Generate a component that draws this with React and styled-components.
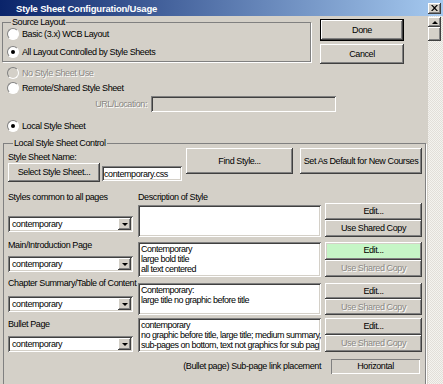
import styled, { createGlobalStyle, css } from "styled-components";

const GlobalStyles = createGlobalStyle`
  html, body {
    margin: 0;
    padding: 0;
  }
  body {
    width: 443px;
    height: 384px;
    overflow: hidden;
    background: #d4d0c8;
    font-family: "Liberation Sans", Arial, sans-serif;
    font-size: 9px;
    letter-spacing: -0.4px;
    line-height: 11px;
    color: #000;
  }
`;

// classic 3d edges
const raised = css`
  box-shadow: inset -1px -1px #404040, inset 1px 1px #ffffff,
    inset -2px -2px #808080, inset 2px 2px #d4d0c8;
`;

const sunken = css`
  box-shadow: inset 1px 1px #808080, inset -1px -1px #ffffff,
    inset 2px 2px #404040, inset -2px -2px #d4d0c8;
`;

const Window = styled.div`
  width: 443px;
  height: 384px;
  display: flex;
  flex-direction: column;
  background: #d4d0c8;
  overflow: hidden;
`;

const TitleBar = styled.div`
  height: 16px;
  flex: none;
  display: flex;
  align-items: center;
  justify-content: space-between;
  padding: 0 2px 0 16px;
  background: linear-gradient(to right, #0a246a, #a6caf0);
  color: #fff;
  font-weight: bold;
  font-size: 9.5px;
  letter-spacing: -0.2px;
`;

const CloseBox = styled.div`
  width: 13px;
  height: 11px;
  background: #d4d0c8;
  display: flex;
  align-items: center;
  justify-content: center;
  ${raised}
`;

const Body = styled.div`
  flex: 1;
  display: flex;
  min-height: 0;
`;

const Content = styled.div`
  width: 428px;
  flex: none;
  padding: 1px 0 0 2px;
  box-sizing: border-box;
`;

const Scrollbar = styled.div`
  width: 15px;
  flex: none;
  display: flex;
  flex-direction: column;
  padding-top: 1px;
  background: repeating-conic-gradient(#f4f3ef 0 25%, #e2dfd9 0 50%) 0 0 / 2px 2px;
`;

const ScrollPart = styled.div`
  width: 13px;
  height: ${(p) => p.$h}px;
  background: #d4d0c8;
  display: flex;
  align-items: center;
  justify-content: center;
  ${raised}
`;

const UpArrow = styled.span`
  width: 0;
  height: 0;
  border-left: 3px solid transparent;
  border-right: 3px solid transparent;
  border-bottom: 3px solid #000;
`;

const TopRow = styled.div`
  display: flex;
  align-items: flex-start;
`;

const Group = styled.fieldset`
  margin: 0;
  margin-left: ${(p) => p.$ml || 0}px;
  margin-top: ${(p) => p.$mt || 0}px;
  width: ${(p) => p.$w}px;
  box-sizing: border-box;
  padding: 0 ${(p) => p.$pr || 4}px ${(p) => p.$pb || 0}px 4px;
  border: 1px solid #808080;
  box-shadow: 1px 1px 0 #fff;
  min-width: 0;
`;

const Legend = styled.legend`
  padding: 0 1px;
  margin-left: ${(p) => p.$ml || 4}px;
  line-height: 11px;
`;

const RadioList = styled.div`
  display: flex;
  flex-direction: column;
  gap: 6px;
  padding-bottom: 3px;
`;

const RadioRow = styled.label`
  display: flex;
  align-items: center;
  gap: 3px;
  height: 12px;
  margin-top: ${(p) => p.$mt || 0}px;
  margin-left: ${(p) => p.$ml || 0}px;
  color: ${(p) => (p.$disabled ? "#8a8884" : "#000")};
  text-shadow: ${(p) => (p.$disabled ? "1px 1px #fff" : "none")};
`;

const RadioDot = styled.span`
  width: 12px;
  height: 12px;
  flex: none;
  box-sizing: border-box;
  border-radius: 50%;
  border: 1px solid;
  border-color: #808080 #ffffff #ffffff #808080;
  background: ${(p) => (p.$disabled ? "#d4d0c8" : "#fff")};
  display: flex;
  align-items: center;
  justify-content: center;

  &::after {
    content: "";
    display: ${(p) => (p.$checked ? "block" : "none")};
    width: 4px;
    height: 4px;
    border-radius: 50%;
    background: #000;
  }
`;

const ButtonCol = styled.div`
  display: flex;
  flex-direction: column;
  gap: 3px;
  margin: 2px 0 0 9px;
`;

const Button = styled.button`
  font: inherit;
  letter-spacing: inherit;
  line-height: 11px;
  white-space: nowrap;
  width: ${(p) => (p.$w ? `${p.$w}px` : "auto")};
  height: ${(p) => (p.$h ? `${p.$h}px` : "auto")};
  flex: ${(p) => (p.$grow ? 1 : "none")};
  margin-left: ${(p) => p.$ml || 0}px;
  padding: 0;
  border: none;
  border-radius: 0;
  background: ${(p) => (p.$highlight ? "#c6f5c6" : "#d4d0c8")};
  color: ${(p) => (p.$disabled ? "#8a8884" : "#000")};
  text-shadow: ${(p) => (p.$disabled ? "1px 1px #fff" : "none")};
  ${raised}
  ${(p) =>
    p.$default &&
    css`
      box-shadow: inset 0 0 0 1px #000, inset -2px -2px #404040,
        inset 2px 2px #ffffff, inset -3px -3px #808080;
    `}
`;

const UrlRow = styled.div`
  display: flex;
  align-items: center;
  margin: 2px 0 0 89px;
`;

const UrlLabel = styled.span`
  color: #8a8884;
  text-shadow: 1px 1px #fff;
  width: 56px;
  text-align: right;
`;

const Field = styled.div`
  width: ${(p) => p.$w}px;
  height: ${(p) => p.$h}px;
  margin: ${(p) => p.$m || "0"};
  box-sizing: border-box;
  background: ${(p) => (p.$gray ? "#d4d0c8" : "#fff")};
  padding: ${(p) => p.$pad || "2px 3px"};
  white-space: pre;
  overflow: hidden;
  line-height: 10px;
  ${sunken}
`;

const NameRow = styled.div`
  display: flex;
  align-items: flex-start;
  margin-top: -1px;
`;

const NameBlock = styled.div`
  display: flex;
  flex-direction: column;
  width: 174px;
`;

const NameLabel = styled.span`
  margin-top: 4px;
`;

const NameControls = styled.div`
  display: flex;
  align-items: flex-start;
`;

const HeaderRow = styled.div`
  display: flex;
  height: 11px;
  margin-top: 10px;
`;

const HeaderLabel = styled.span`
  width: ${(p) => p.$w}px;
  flex: none;
  align-self: ${(p) => (p.$top ? "flex-start" : "flex-end")};
  margin-top: ${(p) => (p.$top ? "0" : "3px")};
`;

const StyleRow = styled.div`
  display: flex;
  height: ${(p) => p.$h}px;
  margin-top: ${(p) => p.$mt}px;
`;

const LeftCell = styled.div`
  width: 125px;
  flex: none;
  margin-right: 5px;
  display: flex;
  flex-direction: column;
  padding-bottom: ${(p) => p.$pb}px;
`;

const RowLabel = styled.span`
  margin-top: ${(p) => p.$mt}px;
  white-space: nowrap;
`;

const Select = styled.div`
  margin-top: auto;
  height: 16px;
  box-sizing: border-box;
  background: #fff;
  display: flex;
  align-items: center;
  justify-content: space-between;
  padding: 2px 2px 2px 4px;
  ${sunken}
`;

const DropButton = styled.span`
  width: 13px;
  height: 12px;
  background: #d4d0c8;
  display: flex;
  align-items: center;
  justify-content: center;
  ${raised}

  &::after {
    content: "";
    border-left: 3px solid transparent;
    border-right: 3px solid transparent;
    border-top: 3px solid #000;
  }
`;

const Desc = styled(Field)`
  flex: none;
  letter-spacing: -0.5px;
`;

const BtnStack = styled.div`
  width: 97px;
  flex: none;
  margin-left: 4px;
  display: flex;
  flex-direction: column;
`;

const PlacementRow = styled.div`
  display: flex;
  align-items: center;
  justify-content: flex-end;
  gap: 10px;
  margin-top: 7px;
  padding-right: 3px;
`;

const PlacementBox = styled.div`
  width: 89px;
  height: 15px;
  box-sizing: border-box;
  display: flex;
  align-items: center;
  justify-content: center;
  background: #d4d0c8;
  box-shadow: inset 1px 1px #808080, inset -1px -1px #ffffff;
`;

const rows = [
  {
    label: "",
    text: "",
    h: 34,
    mt: 0,
    labelTop: 0,
    pb: 5,
    highlight: false,
    shared: true,
  },
  {
    label: "Main/Introduction Page",
    text: "Contemporary\nlarge bold title\nall text centered",
    h: 35,
    mt: 5,
    labelTop: -2,
    pb: 5,
    highlight: true,
    shared: false,
  },
  {
    label: "Chapter Summary/Table of Content",
    text: "Contemporary:\nlarge title no graphic before title",
    h: 32,
    mt: 6,
    labelTop: -5,
    pb: 3,
    highlight: false,
    shared: false,
  },
  {
    label: "Bullet Page",
    text: "contemporary\nno graphic before title, large title; medium summary,\nsub-pages on bottom, text not graphics for sub pag",
    h: 34,
    mt: 3,
    labelTop: 1,
    pb: 0,
    highlight: false,
    shared: false,
  },
];

function Radio({ children, checked, disabled, ...rest }) {
  return (
    <RadioRow $disabled={disabled} {...rest}>
      <RadioDot $checked={checked} $disabled={disabled} />
      {children}
    </RadioRow>
  );
}

function App() {
  return (
    <Window>
      <GlobalStyles />
      <TitleBar>
        <span>Style Sheet Configuration/Usage</span>
        <CloseBox>
          <svg width="7" height="6" viewBox="0 0 7 6">
            <path d="M0 0h1.5l2 2 2-2H7L4.3 3 7 6H5.5l-2-2-2 2H0l2.7-3z" fill="#000" />
          </svg>
        </CloseBox>
      </TitleBar>

      <Body>
        <Content>
          <TopRow>
            <Group $w={309}>
              <Legend>Source Layout</Legend>
              <RadioList>
                <Radio>Basic (3.x) WCB Layout</Radio>
                <Radio checked>All Layout Controlled by Style Sheets</Radio>
              </RadioList>
            </Group>
            <ButtonCol>
              <Button $w={84} $h={22} $default>
                Done
              </Button>
              <Button $w={84} $h={20}>
                Cancel
              </Button>
            </ButtonCol>
          </TopRow>

          <Radio disabled $mt={3} $ml={5}>
            No Style Sheet Use
          </Radio>
          <Radio $mt={3} $ml={5}>
            Remote/Shared Style Sheet
          </Radio>
          <UrlRow>
            <UrlLabel>URL/Location:</UrlLabel>
            <Field $w={185} $h={16} $m="0 0 0 4px" $gray />
          </UrlRow>
          <Radio checked $mt={8} $ml={5}>
            Local Style Sheet
          </Radio>

          <Group $w={423} $ml={1} $mt={6} $pr={2} $pb={30}>
            <Legend $ml={5}>Local Style Sheet Control</Legend>
            <NameRow>
              <NameBlock>
                <NameLabel>Style Sheet Name:</NameLabel>
                <NameControls>
                  <Button $w={92} $h={19}>
                    Select Style Sheet...
                  </Button>
                  <Field $w={80} $h={15} $m="3px 0 0 2px" $pad="3px 2px">
                    contemporary.css
                  </Field>
                </NameControls>
              </NameBlock>
              <Button $w={107} $h={26} $ml={4}>
                Find Style...
              </Button>
              <Button $w={122} $h={26} $ml={7}>
                Set As Default for New Courses
              </Button>
            </NameRow>

            <HeaderRow>
              <HeaderLabel $w={130}>Styles common to all pages</HeaderLabel>
              <HeaderLabel $w={183} $top>
                Description of Style
              </HeaderLabel>
            </HeaderRow>

            {rows.map((row, i) => (
              <StyleRow key={i} $h={row.h} $mt={row.mt}>
                <LeftCell $pb={row.pb}>
                  {row.label && <RowLabel $mt={row.labelTop}>{row.label}</RowLabel>}
                  <Select>
                    <span>contemporary</span>
                    <DropButton />
                  </Select>
                </LeftCell>
                <Desc $w={183} $h={row.h - (i === 0 ? 2 : 0)} $m={i === 0 ? "2px 0 0 0" : "0"}>
                  {row.text}
                </Desc>
                <BtnStack>
                  <Button $grow $highlight={row.highlight}>
                    Edit...
                  </Button>
                  <Button $grow $disabled={!row.shared}>
                    Use Shared Copy
                  </Button>
                </BtnStack>
              </StyleRow>
            ))}

            <PlacementRow>
              <span>(Bullet page) Sub-page link placement</span>
              <PlacementBox>Horizontal</PlacementBox>
            </PlacementRow>
          </Group>
        </Content>

        <Scrollbar>
          <ScrollPart $h={10}>
            <UpArrow />
          </ScrollPart>
          <ScrollPart $h={14} />
        </Scrollbar>
      </Body>
    </Window>
  );
}

export default App;
